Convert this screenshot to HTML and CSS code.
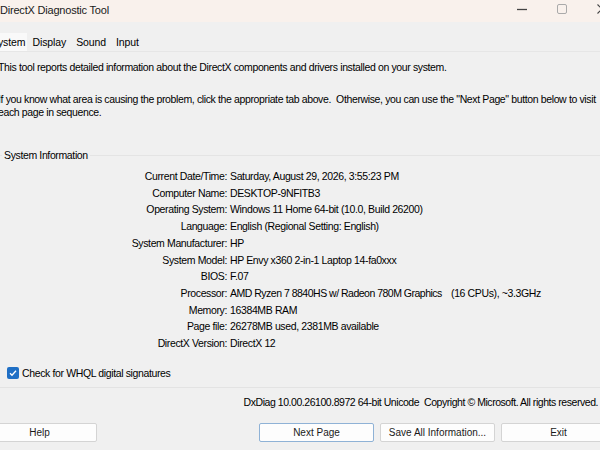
FILE: index.html
```html
<!DOCTYPE html>
<html lang="en">
<head>
    <meta charset="UTF-8">
    <title>DirectX Diagnostic Tool</title>
    <link rel="stylesheet" href="styles.css">
</head>
<body>
    <div class="window">
        <div class="titlebar">
            <span class="title">DirectX Diagnostic Tool</span>
            <div class="caption">
                <span class="cap-btn"><svg width="12" height="12" viewBox="0 0 12 12"><path d="M1 6.5h10" stroke="#444" stroke-width="1.3"/></svg></span>
                <span class="cap-btn"><svg width="12" height="12" viewBox="0 0 12 12"><rect x="1.5" y="1.5" width="9" height="9" rx="1.5" fill="none" stroke="#aaa" stroke-width="1"/></svg></span>
                <span class="cap-btn"><svg width="12" height="12" viewBox="0 0 12 12"><path d="M1.5 1.5l9 9M10.5 1.5l-9 9" stroke="#444" stroke-width="1.1"/></svg></span>
            </div>
        </div>

        <div class="tabs">
            <span class="tab active">System</span>
            <span class="tab">Display</span>
            <span class="tab">Sound</span>
            <span class="tab">Input</span>
        </div>

        <div class="panel">
            <p class="intro">This tool reports detailed information about the DirectX components and drivers installed on your system.</p>
            <p class="intro second">If you know what area is causing the problem, click the appropriate tab above.&nbsp; Otherwise, you can use the "Next Page" button below to visit each page in sequence.</p>

            <div class="group">
                <div class="legend">System Information</div>
                <dl class="info">
                    <dt>Current Date/Time:</dt><dd>Saturday, August 29, 2026, 3:55:23 PM</dd>
                    <dt>Computer Name:</dt><dd>DESKTOP-9NFITB3</dd>
                    <dt>Operating System:</dt><dd>Windows 11 Home 64-bit (10.0, Build 26200)</dd>
                    <dt>Language:</dt><dd>English (Regional Setting: English)</dd>
                    <dt>System Manufacturer:</dt><dd>HP</dd>
                    <dt>System Model:</dt><dd>HP Envy x360 2-in-1 Laptop 14-fa0xxx</dd>
                    <dt>BIOS:</dt><dd>F.07</dd>
                    <dt>Processor:</dt><dd><span class="cpu">AMD Ryzen 7 8840HS w/ Radeon 780M Graphics</span>(16 CPUs), ~3.3GHz</dd>
                    <dt>Memory:</dt><dd>16384MB RAM</dd>
                    <dt>Page file:</dt><dd>26278MB used, 2381MB available</dd>
                    <dt>DirectX Version:</dt><dd>DirectX 12</dd>
                </dl>
            </div>

            <label class="check">
                <span class="box"><svg width="10" height="10" viewBox="0 0 10 10"><path d="M2 5.2l2 2 4-4.4" fill="none" stroke="#fff" stroke-width="1.3"/></svg></span>
                Check for WHQL digital signatures
            </label>
        </div>

        <div class="version">DxDiag 10.00.26100.8972 64-bit Unicode&nbsp; Copyright © Microsoft. All rights reserved.</div>

        <div class="buttons">
            <button>Help</button>
            <div class="right-buttons">
                <button class="default">Next Page</button>
                <button>Save All Information...</button>
                <button>Exit</button>
            </div>
        </div>
    </div>
</body>
</html>
```

FILE: styles.css
```css
body, html {
    margin: 0;
    padding: 0;
    background: #f0f0f0;
    overflow: hidden;
}

/* the window runs a little past the left edge of the screen */
.window {
    width: 650px;
    height: 450px;
    margin-left: -24px;
    font-family: "Liberation Sans", Arial, sans-serif;
    font-size: 10.5px;
    letter-spacing: -0.37px;
    color: #000;
    background: #f0f0f0;
}

.titlebar {
    height: 22px;
    background: #f9f1ec;
    display: flex;
    align-items: center;
    justify-content: space-between;
}

.title {
    font-size: 11px;
    letter-spacing: -0.2px;
    color: #1a1a1a;
    padding-left: 24px;
    margin-top: -2px;
}

.caption {
    display: flex;
    margin-right: 4px;
    margin-top: -4px;
}

.cap-btn {
    width: 40px;
    display: flex;
    justify-content: center;
}

.tabs {
    margin-top: 11px;
    height: 18px;
    display: flex;
    font-size: 10.5px;
    letter-spacing: -0.1px;
    border-bottom: 1px solid #e6e6e6;
}

.tab {
    padding: 0 5px;
    line-height: 18px;
}

.tab.active {
    background: #f9f9f9;
    padding-left: 15px;
    padding-right: 2px;
}

.panel {
    height: 336px;
    border-bottom: 1px solid #e3e3e3;
    padding-left: 22px;
    box-sizing: border-box;
    padding-top: 9px;
}

.intro {
    margin: 0;
    line-height: 13px;
}

.intro.second {
    margin-top: 19px;
    width: 608px;
}

.group {
    margin-top: 36px;
    border-top: 1px solid #e4e4e4;
    margin-left: -10px;
    position: relative;
    padding-top: 12px;
}

.legend {
    position: absolute;
    top: -7px;
    left: 14px;
    background: #f0f0f0;
    padding: 0 2px;
}

.info {
    margin: 0;
    display: grid;
    grid-template-columns: 239px auto;
    column-gap: 3px;
    line-height: 16.7px;
}

.info dt {
    text-align: right;
}

.info dd {
    margin: 0;
    white-space: nowrap;
}

/* processor name and core count sit in two columns */
.cpu {
    display: inline-block;
    width: 221px;
    letter-spacing: -0.5px;
}

.check {
    display: flex;
    align-items: center;
    gap: 3px;
    margin-top: 15px;
    margin-left: 9px;
}

.box {
    width: 12px;
    height: 12px;
    background: #1f6fc5;
    border-radius: 2px;
    display: flex;
    align-items: center;
    justify-content: center;
}

.version {
    text-align: right;
    padding-right: 28px;
    margin-top: 8px;
    line-height: 13px;
    letter-spacing: -0.45px;
}

.buttons {
    display: flex;
    justify-content: space-between;
    margin-top: 14px;
    padding-left: 6px;
    padding-right: 10px;
}

.right-buttons {
    display: flex;
    gap: 6px;
}

button {
    width: 115px;
    height: 19px;
    padding: 0;
    background: #fdfdfd;
    border: 1px solid #d4d4d4;
    border-radius: 2px;
    font-family: "Liberation Sans", Arial, sans-serif;
    font-size: 10px;
    white-space: nowrap;
    color: #1a1a1a;
}

button.default {
    border-color: #8fb2d6;
}
```
